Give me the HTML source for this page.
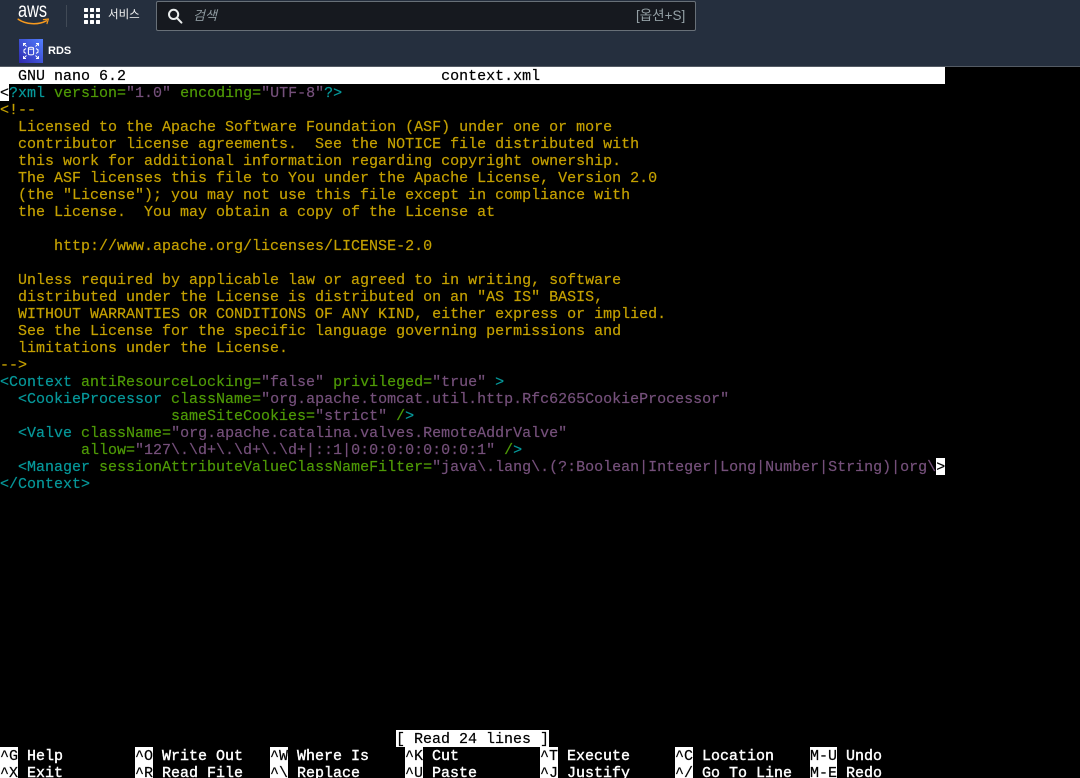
<!DOCTYPE html>
<html lang="ko">
<head>
<meta charset="utf-8">
<title>context.xml</title>
<style>
html,body{margin:0;padding:0;background:#000;}
body{position:relative;width:1080px;height:778px;overflow:hidden;}
#hdr{position:absolute;left:0;top:0;width:1080px;height:66px;background:#252f3e;}
#hline{position:absolute;left:0;top:66px;width:1080px;height:1px;background:#545b64;}
#sep{position:absolute;left:66px;top:5px;width:1px;height:22px;background:#414a56;}
#search{position:absolute;left:156px;top:1px;width:538px;height:28px;background:#16191f;border:1px solid #687078;border-radius:2px;}
.ui{position:absolute;font-family:"Liberation Sans","Noto Sans CJK KR",sans-serif;white-space:pre;}
svg{position:absolute;}
#term{position:absolute;left:0;top:67px;width:1080px;height:711px;overflow:hidden;font-family:"Liberation Mono",monospace;font-size:15px;line-height:19px;color:#fff;-webkit-text-stroke:.2px;}
.r{position:absolute;left:0;height:17px;white-space:pre;}
.y{color:#c4a000}.c{color:#06989a}.g{color:#4e9a06}.p{color:#75507b}
.i{background:#fff;color:#000}
span.i{display:inline-block;height:17px;vertical-align:top;}
.k{position:absolute;height:17px;background:#fff;color:#000;white-space:pre;}
.l{position:absolute;height:17px;color:#fff;white-space:pre;-webkit-text-stroke:.4px #fff;}
</style>
</head>
<body>
<div id="hdr"></div>
<div id="hline"></div>

<svg style="left:17px;top:0" width="34" height="28" viewBox="0 0 34 28">
  <text x="1" y="17" font-family="Liberation Sans" font-size="21" fill="#fff" textLength="29" lengthAdjust="spacingAndGlyphs">aws</text>
  <path d="M1.2 19.2C9 24.6 21 25.2 29.4 20.8" fill="none" stroke="#f79a1e" stroke-width="1.5" stroke-linecap="round"/>
  <path d="M26.4 19.6L31.4 19L30 23.6" fill="none" stroke="#f79a1e" stroke-width="1.2" stroke-linecap="round" stroke-linejoin="round"/>
</svg>
<div id="sep"></div>

<svg style="left:84px;top:8px" width="16" height="16" viewBox="0 0 16 16" fill="#fff">
  <rect x="0" y="0" width="4" height="4" rx=".6"/><rect x="6" y="0" width="4" height="4" rx=".6"/><rect x="12" y="0" width="4" height="4" rx=".6"/>
  <rect x="0" y="6" width="4" height="4" rx=".6"/><rect x="6" y="6" width="4" height="4" rx=".6"/><rect x="12" y="6" width="4" height="4" rx=".6"/>
  <rect x="0" y="12" width="4" height="4" rx=".6"/><rect x="6" y="12" width="4" height="4" rx=".6"/><rect x="12" y="12" width="4" height="4" rx=".6"/>
</svg>
<div class="ui" style="left:108px;top:7px;font-size:11.5px;line-height:17px;color:#f2f3f3;">서비스</div>

<div id="search"></div>
<svg style="left:167px;top:8px" width="16" height="16" viewBox="0 0 16 16" fill="none" stroke="#eaeded" stroke-width="2">
  <circle cx="6.6" cy="6.4" r="4.6"/><path d="M10 10L14.4 14.6" stroke-linecap="round"/>
</svg>
<div class="ui" style="left:193px;top:7px;font-size:13px;line-height:18px;color:#8f9ba1;font-style:italic;">검색</div>
<div class="ui" style="left:636px;top:6px;font-size:13.5px;line-height:19px;color:#95a1a6;">[옵션+S]</div>

<svg style="left:19px;top:39px" width="24" height="24" viewBox="0 0 24 24">
  <defs><linearGradient id="rg" x1="0" y1="1" x2="1" y2="0"><stop offset="0" stop-color="#2e27ad"/><stop offset="1" stop-color="#527fff"/></linearGradient></defs>
  <rect width="24" height="24" fill="url(#rg)"/>
  <g fill="none" stroke="#fff" stroke-width="1">
    <ellipse cx="12" cy="9.2" rx="2.6" ry="1"/>
    <path d="M9.4 9.2V14.8C9.4 15.5 10.6 15.9 12 15.9S14.6 15.5 14.6 14.8V9.2"/>
    <path d="M7 9.6L5 10.8V13.2L7 14.4M17 9.6L19 10.8V13.2L17 14.4"/>
    <path d="M4.5 4.5L7.5 7.5M4 4.5H7M4.5 4V7M19.5 4.5L16.5 7.5M17 4.5H20M19.5 4V7M4.5 19.5L7.5 16.5M4 19.5H7M4.5 17V20M19.5 19.5L16.5 16.5M17 19.5H20M19.5 17V20" stroke-width=".9"/>
  </g>
</svg>
<div class="ui" style="left:48px;top:43px;font-size:11px;line-height:16px;color:#fff;font-weight:bold;">RDS</div>

<div id="term">
<div class="r i" style="top:0;width:945px;">  GNU nano 6.2                                   context.xml</div>
<div class="r" style="top:17px"><span class="i">&lt;</span><span class="c">?xml</span><span class="g"> version=</span><span class="p">"1.0"</span><span class="g"> encoding=</span><span class="p">"UTF-8"</span><span class="c">?&gt;</span></div>
<div class="r y" style="top:34px">&lt;!--</div>
<div class="r y" style="top:51px">  Licensed to the Apache Software Foundation (ASF) under one or more</div>
<div class="r y" style="top:68px">  contributor license agreements.  See the NOTICE file distributed with</div>
<div class="r y" style="top:85px">  this work for additional information regarding copyright ownership.</div>
<div class="r y" style="top:102px">  The ASF licenses this file to You under the Apache License, Version 2.0</div>
<div class="r y" style="top:119px">  (the "License"); you may not use this file except in compliance with</div>
<div class="r y" style="top:136px">  the License.  You may obtain a copy of the License at</div>
<div class="r y" style="top:170px">      http://www.apache.org/licenses/LICENSE-2.0</div>
<div class="r y" style="top:204px">  Unless required by applicable law or agreed to in writing, software</div>
<div class="r y" style="top:221px">  distributed under the License is distributed on an "AS IS" BASIS,</div>
<div class="r y" style="top:238px">  WITHOUT WARRANTIES OR CONDITIONS OF ANY KIND, either express or implied.</div>
<div class="r y" style="top:255px">  See the License for the specific language governing permissions and</div>
<div class="r y" style="top:272px">  limitations under the License.</div>
<div class="r y" style="top:289px">--&gt;</div>
<div class="r" style="top:306px"><span class="c">&lt;Context</span><span class="g"> antiResourceLocking=</span><span class="p">"false"</span><span class="g"> privileged=</span><span class="p">"true"</span> <span class="c">&gt;</span></div>
<div class="r" style="top:323px">  <span class="c">&lt;CookieProcessor</span><span class="g"> className=</span><span class="p">"org.apache.tomcat.util.http.Rfc6265CookieProcessor"</span></div>
<div class="r" style="top:340px">                   <span class="g">sameSiteCookies=</span><span class="p">"strict"</span> <span class="g">/</span><span class="c">&gt;</span></div>
<div class="r" style="top:357px">  <span class="c">&lt;Valve</span><span class="g"> className=</span><span class="p">"org.apache.catalina.valves.RemoteAddrValve"</span></div>
<div class="r" style="top:374px">         <span class="g">allow=</span><span class="p">"127\.\d+\.\d+\.\d+|::1|0:0:0:0:0:0:0:1"</span> <span class="g">/</span><span class="c">&gt;</span></div>
<div class="r" style="top:391px">  <span class="c">&lt;Manager</span><span class="g"> sessionAttributeValueClassNameFilter=</span><span class="p">"java\.lang\.(?:Boolean|Integer|Long|Number|String)|org\</span><span class="i">&gt;</span></div>
<div class="r c" style="top:408px">&lt;/Context&gt;</div>

<div class="k" style="left:396px;top:663px;">[ Read 24 lines ]</div>

<div class="k" style="left:0;top:680px">^G</div><div class="l" style="left:27px;top:680px">Help</div>
<div class="k" style="left:135px;top:680px">^O</div><div class="l" style="left:162px;top:680px">Write Out</div>
<div class="k" style="left:270px;top:680px">^W</div><div class="l" style="left:297px;top:680px">Where Is</div>
<div class="k" style="left:405px;top:680px">^K</div><div class="l" style="left:432px;top:680px">Cut</div>
<div class="k" style="left:540px;top:680px">^T</div><div class="l" style="left:567px;top:680px">Execute</div>
<div class="k" style="left:675px;top:680px">^C</div><div class="l" style="left:702px;top:680px">Location</div>
<div class="k" style="left:810px;top:680px">M-U</div><div class="l" style="left:846px;top:680px">Undo</div>

<div class="k" style="left:0;top:697px">^X</div><div class="l" style="left:27px;top:697px">Exit</div>
<div class="k" style="left:135px;top:697px">^R</div><div class="l" style="left:162px;top:697px">Read File</div>
<div class="k" style="left:270px;top:697px">^\</div><div class="l" style="left:297px;top:697px">Replace</div>
<div class="k" style="left:405px;top:697px">^U</div><div class="l" style="left:432px;top:697px">Paste</div>
<div class="k" style="left:540px;top:697px">^J</div><div class="l" style="left:567px;top:697px">Justify</div>
<div class="k" style="left:675px;top:697px">^/</div><div class="l" style="left:702px;top:697px">Go To Line</div>
<div class="k" style="left:810px;top:697px">M-E</div><div class="l" style="left:846px;top:697px">Redo</div>
</div>
</body>
</html>
